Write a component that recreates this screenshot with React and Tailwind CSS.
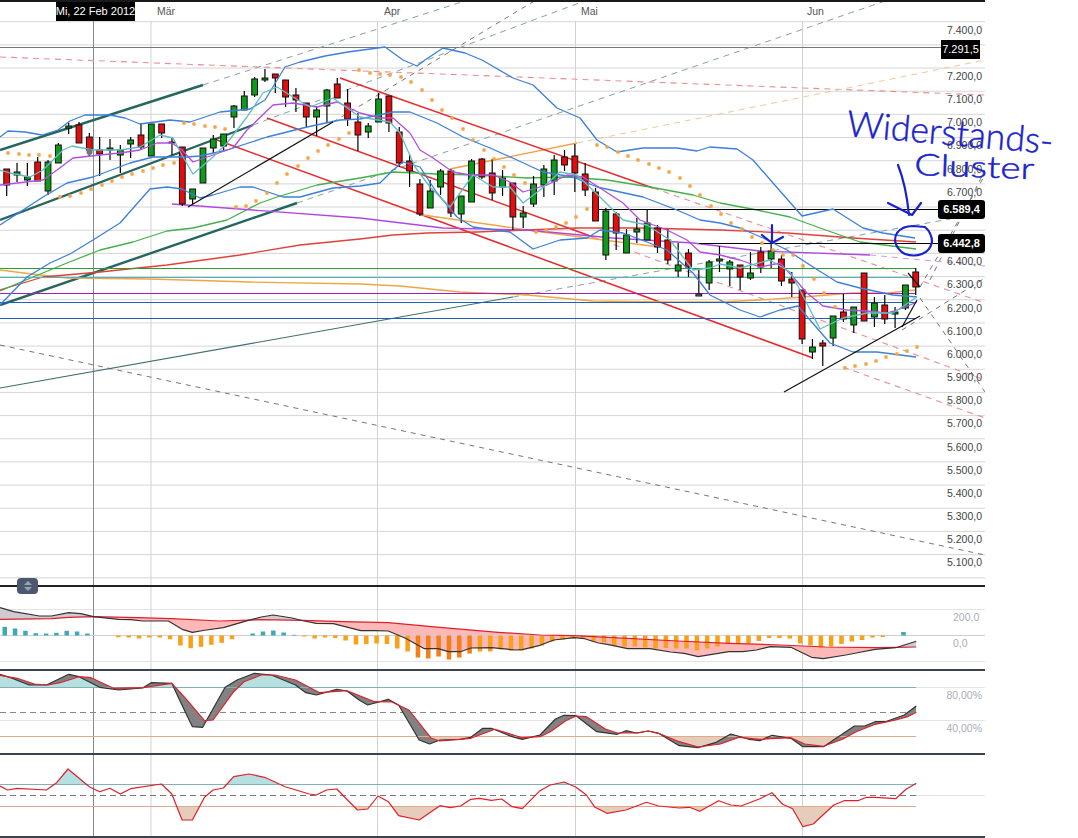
import React from "react";

const candleX = (i) => 6.7 + 10.33 * i;

// bodyTop, bodyBottom, wickTop, wickBottom, colour
const candles = [
  [169,185,169,196,"r"],[172,175,163,182,"g"],[177,180,163,186,"g"],[162,181,157,181,"r"],[162,191,160,195,"g"],
  [145,163,143,163,"g"],[126,128,123,134,"g"],[125,143,122,143,"r"],[137,150,133,157,"r"],[150,154,137,176,"r"],
  [148,150,139,160,"g"],[150,155,145,173,"g"],[140,144,137,158,"g"],[135,147,123,150,"r"],[124,156,124,156,"g"],
  [124,133,124,138,"r"],[142,143,137,155,"g"],[147,204,147,206,"r"],[189,199,189,204,"g"],[148,183,148,183,"g"],
  [139,148,135,153,"g"],[134,146,134,150,"g"],[106,117,105,128,"g"],[96,110,91,110,"g"],[79,95,77,97,"g"],
  [78,80,69,82,"g"],[74,78,74,93,"r"],[80,97,80,107,"r"],[95,100,88,112,"r"],[103,117,103,128,"r"],
  [110,117,106,136,"g"],[90,106,89,123,"g"],[84,98,78,98,"r"],[103,119,89,126,"r"],[122,135,113,151,"r"],
  [126,132,123,138,"g"],[99,122,93,122,"g"],[96,123,96,132,"r"],[132,163,127,167,"r"],[161,171,154,187,"r"],
  [184,214,179,216,"r"],[191,208,180,208,"g"],[171,187,169,195,"g"],[171,213,169,217,"r"],[196,214,196,223,"g"],
  [161,202,159,202,"g"],[159,177,158,179,"r"],[173,193,159,200,"r"],[178,187,170,196,"g"],[183,217,183,230,"r"],
  [213,217,206,228,"g"],[184,204,176,207,"g"],[169,185,165,197,"g"],[160,181,155,195,"g"],[157,165,150,171,"r"],
  [156,173,144,192,"r"],[174,190,163,196,"r"],[192,221,188,221,"r"],[211,255,208,260,"g"],[214,233,212,250,"r"],
  [235,253,229,253,"g"],[229,232,218,243,"g"],[223,240,210,240,"g"],[228,247,225,253,"r"],[240,260,229,264,"r"],
  [265,271,243,277,"g"],[253,267,249,277,"r"],[294,296,269,296,"k"],[262,283,260,290,"g"],[259,261,246,272,"g"],
  [262,269,260,286,"g"],[265,277,265,290,"r"],[273,278,252,280,"g"],[252,267,247,273,"r"],[251,259,243,268,"g"],
  [259,281,255,286,"r"],[279,283,272,297,"r"],[290,339,290,344,"r"],[347,352,339,359,"g"],[343,346,340,366,"r"],
  [316,338,316,346,"g"],[312,319,294,322,"r"],[307,325,307,333,"g"],[273,321,273,321,"r"],[303,317,297,327,"g"],
  [305,319,295,324,"r"],[312,314,307,328,"g"],[285,308,285,310,"g"],[272,287,268,295,"r"],
];

const bollUp = [[0,137],[8,131],[25,132],[42,135],[58,130],[70,121],[85,115],[110,115],[125,118],[140,124],[170,120],[190,122],[220,112],[250,109],[265,100],[285,67],[300,62],[325,56],[348,52],[385,47],[403,60],[417,66],[425,60],[443,48],[465,53],[482,60],[513,78],[533,85],[557,108],[580,118],[597,140],[617,152],[643,148],[677,148],[697,151],[710,147],[737,149],[753,160],[773,183],[802,216],[833,209],[863,228],[883,233],[915,238]];
const bollMid = [[0,225],[43,197],[67,183],[93,177],[130,163],[153,157],[187,157],[200,156],[227,150],[267,137],[307,127],[340,120],[360,119],[393,112],[410,112],[437,123],[463,137],[490,148],[517,160],[543,172],[573,177],[597,187],[643,197],[677,210],[700,220],[720,223],[740,228],[763,238],[787,250],[813,267],[837,282],[860,288],[893,295],[917,297]];
const bollLow = [[0,305],[27,277],[50,263],[70,254],[93,240],[120,223],[150,189],[167,187],[182,189],[200,198],[213,195],[240,187],[253,187],[283,197],[300,197],[333,188],[360,186],[380,183],[393,170],[403,162],[420,167],[437,193],[457,217],[473,227],[510,232],[533,249],[560,240],[587,238],[600,230],[623,233],[647,242],[667,250],[693,273],[710,295],[740,310],[760,317],[780,310],[798,306],[810,320],[830,343],[853,352],[877,352],[916,357]];
const purple = [[0,185],[43,180],[57,170],[73,158],[100,155],[120,153],[140,150],[157,143],[172,143],[182,150],[193,162],[213,155],[233,148],[247,130],[273,105],[293,103],[317,107],[337,102],[360,113],[380,118],[393,118],[410,133],[420,150],[433,158],[453,172],[470,175],[493,175],[510,182],[523,192],[547,185],[567,175],[583,177],[600,188],[623,203],[640,220],[667,230],[687,240],[700,252],[720,255],[740,260],[760,267],[780,263],[793,277],[807,293],[823,306],[847,310],[867,311],[887,313],[903,308],[917,302]];
const teal = [[0,170],[10,173],[30,177],[43,170],[63,150],[72,146],[93,150],[120,150],[140,147],[160,135],[173,138],[183,157],[193,174],[213,157],[227,143],[247,117],[263,93],[277,87],[293,97],[310,107],[333,98],[360,117],[390,122],[400,133],[415,167],[430,187],[450,207],[460,193],[473,175],[493,187],[510,187],[523,203],[540,190],[560,172],[577,175],[600,197],[623,220],[647,225],[670,240],[693,270],[710,268],[720,264],[740,268],[770,260],[790,272],[800,290],[820,329],[843,318],[867,313],[893,313],[917,297]];
const greenMa = [[0,291],[33,277],[67,263],[100,250],[133,242],[167,231],[193,228],[227,220],[260,203],[277,197],[317,185],[360,178],[393,172],[437,174],[477,175],[527,178],[567,177],[607,180],[650,187],[693,195],[720,203],[757,210],[790,217],[820,228],[860,242],[916,249]];
const redMa = [[0,290],[43,277],[100,272],[167,265],[240,255],[300,245],[360,239],[393,235],[427,233],[477,232],[527,230],[577,228],[643,228],[720,230],[787,233],[853,238],[916,242]];
const purpleLong = [[172,204],[360,218],[443,228],[527,230],[613,238],[693,243],[760,251],[870,255]];
const orangeLong = [[0,270],[40,275],[67,278],[150,279],[250,282],[360,284],[400,286],[460,292],[527,295],[593,301],[660,302],[720,302],[760,300],[803,297],[853,293],[887,293],[916,290]];
const orangeLow = [[423,215],[493,225],[527,230],[603,240],[660,247]];

const psar = [
  [8,153],[19,154],[29,155],[39,155],[50,156],[60,197],[70,196],[81,193],[91,189],[102,185],[112,181],[122,177],[132,174],[143,171],[153,168],[163,165],[174,163],
  [184,123],[194,124],[205,126],[215,127],[225,129],[236,207],[246,206],[256,201],[267,193],[277,183],[287,174],[298,166],[308,158],[318,151],[328,145],[339,139],[349,133],
  [359,70],[370,73],[380,74],[390,75],[401,77],[411,82],[422,90],[432,100],[442,110],[452,118],[463,129],[473,140],[484,150],[494,159],[504,167],[514,175],[525,183],
  [536,232],[546,230],[556,227],[566,223],[576,217],[587,209],[597,145],[607,147],[618,152],[628,156],[638,160],[649,164],[659,168],[669,172],[680,178],[690,186],[700,195],[711,206],
  [721,214],[731,223],[742,229],[752,237],[762,243],[773,250],[783,255],[793,255],[803,266],[814,279],[824,293],[835,307],[845,368],[855,366],[866,364],[876,361],[886,357],[897,354],[907,351],[917,347],
];

// straight segments: x1,y1,x2,y2
const solidRed = [[340,78,653,188],[267,118,593,237],[217,140,813,358]];
const dashedRed = [[653,188,985,303],[593,237,985,380],[843,367,985,418],[0,57,985,95]];
const solidTeal = [[0,150,203,85],[0,220,253,125],[0,305,297,203]];
const dashedTeal = [[203,85,468,0],[253,125,587,0],[297,203,888,0],[513,297,950,219]];
const dashedGray = [[333,122,536,0],[0,345,985,555],[920,287,985,175],[930,280,985,170],[920,298,985,392],[902,330,985,278]];
const solidBlack = [[188,207,333,122],[784,392,920,316],[902,327,917,300],[908,273,920,287]];

const macdHist = [8.7,7,4.7,2.3,2,2.7,4.7,4,2,0,0,-1.7,-2,-3,-2,-2,-3.7,-10,-12.7,-11.3,-9.3,-7.3,-3.7,0,2,4,5,3,0.7,-1,-3,-2,-2.5,-5,-9,-8.7,-8,-8.5,-13,-16,-22,-23,-21,-24,-22,-18,-16,-16,-14,-15,-15,-13,-10,-6,-4,-3,-3.5,-6,-7,-10,-11,-11,-12,-13,-12.5,-13,-13,-15,-13,-11,-8,-8,-8,-5.5,-2.5,-2.5,-3,-8,-10,-12,-11,-8.5,-6,-4.5,-2,-1.5,0,3.5];

// readings taken off the crops, left half and right half of the indicators
const left = (pts) => pts.map(([x, y]) => [x / 2.91, 570 + y / 3]);
const right = (pts) => pts.map(([x, y]) => [540 + x / 2.91, 570 + y / 3]);

const macdBlack = [...left([[0,113],[40,125],[115,138],[150,138],[200,128],[235,131],[272,140],[345,148],[380,149],[415,153],[490,153],[530,178],[560,187],[600,180],[650,173],[720,152],[760,141],[795,135],[850,144],[885,153],[920,160],[970,161],[1050,182],[1090,182],[1130,183],[1180,205],[1235,236],[1275,236],[1305,245],[1340,245],[1370,234],[1430,233],[1500,240],[1520,239]]), ...right([[0,226],[40,210],[100,203],[130,206],[170,219],[200,224],[255,236],[320,236],[380,246],[420,250],[460,260],[550,245],[590,245],[630,240],[670,230],[730,232],[790,262],[825,266],[890,255],[920,249],[975,238],[1035,233],[1095,214]])];
const macdRed = [...left([[0,148],[150,146],[200,142],[272,140],[400,143],[500,146],[640,153],[760,149],[880,151],[1000,155],[1130,158],[1280,172],[1450,187]]), ...right([[0,195],[100,197],[200,202],[400,213],[550,220],[700,225],[830,231],[975,233],[1035,232],[1095,231]])];

const stochBlack = [...left([[0,313],[35,325],[85,345],[135,345],[200,313],[230,320],[290,352],[345,360],[415,354],[440,338],[500,340],[525,395],[560,470],[590,472],[655,352],[690,330],[740,310],[790,315],[860,345],[890,368],[920,375],[980,358],[1010,363],[1045,390],[1070,405],[1130,388],[1160,405],[1220,510],[1250,522],[1280,510],[1340,508],[1370,502],[1405,475],[1430,475],[1490,500],[1520,508]]), ...right([[0,495],[45,447],[70,436],[105,437],[165,485],[225,493],[250,482],[280,489],[315,483],[345,490],[405,527],[460,533],[510,518],[555,492],[610,508],[640,512],[675,496],[730,505],[765,530],[825,530],[915,468],[945,468],[975,455],[1005,455],[1060,435],[1095,408]])];
const stochRed = [...left([[0,316],[50,325],[100,342],[140,345],[175,338],[230,320],[265,323],[330,355],[415,353],[500,340],[540,385],[595,452],[620,450],[680,365],[710,335],[760,315],[800,315],[860,330],[930,368],[1010,362],[1090,395],[1140,396],[1190,420],[1255,505],[1280,513],[1370,505],[1440,478],[1520,503]]), ...right([[0,500],[30,485],[75,452],[105,438],[135,440],[190,477],[225,489],[285,489],[315,483],[345,490],[405,515],[460,531],[525,522],[580,502],[640,508],[730,503],[770,522],[825,529],[880,508],[920,485],[975,463],[1035,450],[1070,440],[1095,427]])];
const rsi = [...left([[0,648],[22,660],[50,655],[135,660],[165,638],[198,597],[260,650],[290,665],[320,655],[350,672],[380,656],[470,642],[500,672],[530,750],[560,750],[595,682],[620,660],[650,654],[680,620],[725,612],[770,622],[830,650],[900,672],[920,675],[950,660],[980,657],[1040,720],[1070,717],[1100,678],[1130,695],[1160,737],[1220,750],[1280,707],[1310,713],[1340,708],[1370,688],[1395,685],[1430,691],[1460,687],[1490,710],[1520,716]]), ...right([[0,662],[30,645],[70,636],[105,652],[135,675],[160,712],[195,730],[250,720],[310,697],[345,708],[405,714],[435,712],[465,724],[520,692],[555,705],[585,708],[640,686],[675,668],[705,702],[735,716],[765,770],[795,762],[855,705],[885,692],[925,692],[950,682],[975,682],[1035,686],[1065,658],[1095,640]])];

const toPoints = (pts) => pts.map(([x, y]) => `${x.toFixed(1)},${y.toFixed(1)}`).join(" ");

function yAt(pts, x) {
  for (let i = 1; i < pts.length; i++) {
    if (x <= pts[i][0]) {
      const [x0, y0] = pts[i - 1];
      const [x1, y1] = pts[i];
      return y0 + ((y1 - y0) * (x - x0)) / (x1 - x0 || 1);
    }
  }
  return pts[pts.length - 1][1];
}

// polygons between two lines, split where they cross. above = a is higher on screen
function bands(a, b) {
  const out = [];
  let run = null;
  const end = Math.min(a[a.length - 1][0], b[b.length - 1][0]);
  for (let x = 0; x <= end; x += 1) {
    const ya = yAt(a, x);
    const yb = yAt(b, x);
    const above = ya < yb;
    if (!run || run.above !== above) {
      run = { above, top: [], bottom: [] };
      out.push(run);
    }
    run.top.push([x, ya]);
    run.bottom.push([x, yb]);
  }
  return out.map((r) => ({ above: r.above, points: toPoints([...r.top, ...r.bottom.reverse()]) }));
}

const level = (y) => [[0, y], [985, y]];

function Segments({ items, color, width = 1, dash }) {
  return items.map(([x1, y1, x2, y2], i) => (
    <line key={i} x1={x1} y1={y1} x2={x2} y2={y2} stroke={color} strokeWidth={width} strokeDasharray={dash} />
  ));
}

function Line({ pts, color, width = 1.3 }) {
  return <polyline points={toPoints(pts)} fill="none" stroke={color} strokeWidth={width} strokeLinejoin="round" />;
}

function VGrid({ y1, y2 }) {
  return (
    <>
      {[151, 377.5, 575.5, 802.5].map((x) => (
        <line key={x} x1={x} y1={y1} x2={x} y2={y2} stroke="#d2d2d2" />
      ))}
      <line x1="93.5" y1={y1} x2="93.5" y2={y2} stroke="#8a8a8a" />
    </>
  );
}

function PriceChart() {
  return (
    <svg className="block w-[985px] h-[583px]" viewBox="0 2 985 583">
      {Array.from({ length: 25 }, (_, k) => (
        <line key={k} x1="0" x2="985" y1={21.7 + 23.17 * k} y2={21.7 + 23.17 * k} stroke="#d6d6d6" />
      ))}
      <VGrid y1="21" y2="585" />
      <line x1="0" y1="47.5" x2="941" y2="47.5" stroke="#777" />

      <Segments items={dashedTeal} color="#85a3a3" dash="6 5" />
      <Segments items={dashedGray} color="#777" dash="5 5" />
      <Segments items={dashedRed} color="#ea8f8f" dash="6 5" width={1.1} />
      <Segments items={[[450,169,577,143]]} color="#f0a040" width={1.3} />
      <Segments items={[[577,143,985,60]]} color="#f3c894" dash="6 5" />
      <Segments items={[[0,388,513,297]]} color="#3f6e6e" width={1.1} />
      <Segments items={[[870,255,985,266]]} color="#cf9ae8" dash="6 5" />
      <Segments items={solidTeal} color="#25665f" width={2.4} />
      <Segments items={solidRed} color="#e62a2a" width={1.5} />

      <Line pts={orangeLong} color="#f0a548" />
      <Line pts={orangeLow} color="#f0a548" />
      <Line pts={redMa} color="#e0413a" />
      <Line pts={greenMa} color="#43b04a" />
      <Line pts={purpleLong} color="#b048e0" />

      <line x1="0" x2="916" y1="268.5" y2="268.5" stroke="#2c9e2c" />
      <line x1="0" x2="916" y1="277.5" y2="277.5" stroke="#4db5bb" />
      <line x1="0" x2="916" y1="293.5" y2="293.5" stroke="#a01fb8" />
      <line x1="0" x2="916" y1="302.5" y2="302.5" stroke="#1a5fc0" />
      <line x1="0" x2="916" y1="318.5" y2="318.5" stroke="#1a5fc0" />
      <line x1="599" x2="941" y1="209.5" y2="209.5" stroke="#000" />
      <line x1="699" x2="941" y1="243.5" y2="243.5" stroke="#000" />

      {candles.map(([top, bottom, wickTop, wickBottom, c], i) => {
        const x = candleX(i);
        const fill = c === "r" ? "#e30d0d" : c === "g" ? "#0f9a1c" : "#777";
        return (
          <g key={i}>
            <line x1={x} x2={x} y1={wickTop} y2={wickBottom} stroke="#000" strokeWidth="1.2" />
            <rect x={x - 2.9} y={top} width="5.8" height={bottom - top} fill={fill} stroke="#111" strokeWidth="1" />
          </g>
        );
      })}

      <Line pts={bollUp} color="#3c7fdc" />
      <Line pts={bollMid} color="#3c7fdc" />
      <Line pts={bollLow} color="#3c7fdc" />
      <Line pts={purple} color="#b04fe0" />
      <Line pts={teal} color="#62bcc2" />
      <Segments items={solidBlack} color="#111" width={1.2} />

      {psar.map(([x, y], i) => (
        <rect key={i} x={x - 1.7} y={y - 1.7} width="3.4" height="3.4" rx="0.8" fill="#f3a648" />
      ))}
      <circle cx="89.5" cy="152" r="3" fill="#777" />
    </svg>
  );
}

function MacdChart() {
  return (
    <svg className="block w-[985px] h-[82px]" viewBox="0 587 985 82">
      <line x1="0" x2="985" y1="609.5" y2="609.5" stroke="#e4e4e4" />
      <line x1="0" x2="985" y1="661.5" y2="661.5" stroke="#e4e4e4" />
      <VGrid y1="587" y2="669" />
      {bands(macdBlack, macdRed).map((b, i) => (
        <polygon key={i} points={b.points} fill={b.above ? "#cfcbd0" : "#ffb8b8"} />
      ))}
      <line x1="0" x2="985" y1="635.5" y2="635.5" stroke="#cfcfcf" />
      {macdHist.map((v, i) =>
        v === 0 ? null : (
          <rect
            key={i}
            x={candleX(i) - 4.2}
            y={v > 0 ? 635.5 - v : 635.5}
            width="4.5"
            height={Math.abs(v)}
            fill={v > 0 ? "#3fa9b9" : v < -16 ? "#f57f17" : "#f9a01b"}
          />
        )
      )}
      <Line pts={macdRed} color="#e01f2a" width={1.2} />
      <Line pts={macdBlack} color="#333" width={1.2} />
    </svg>
  );
}

function StochChart() {
  const hi = level(687.5);
  const lo = level(736.5);
  return (
    <svg className="block w-[985px] h-[82px]" viewBox="0 671 985 82">
      <line x1="0" x2="985" y1="687.5" y2="687.5" stroke="#e4e4e4" />
      <line x1="0" x2="985" y1="720.5" y2="720.5" stroke="#e4e4e4" />
      <VGrid y1="671" y2="753" />
      {bands(stochRed, hi).filter((b) => b.above).map((b, i) => (
        <polygon key={i} points={b.points} fill="#b6dfe0" />
      ))}
      {bands(stochRed, lo).filter((b) => !b.above).map((b, i) => (
        <polygon key={i} points={b.points} fill="#e6cdbb" />
      ))}
      {bands(stochBlack, stochRed).map((b, i) => (
        <polygon key={i} points={b.points} fill="#828282" />
      ))}
      <line x1="0" x2="916" y1="687.5" y2="687.5" stroke="#7fb2b5" />
      <line x1="0" x2="916" y1="712.5" y2="712.5" stroke="#888" strokeDasharray="6 4" />
      <line x1="0" x2="916" y1="736.5" y2="736.5" stroke="#e0a98c" />
      <Line pts={stochBlack} color="#333" width={1.2} />
      <Line pts={stochRed} color="#e01f2a" width={1.2} />
    </svg>
  );
}

function RsiChart() {
  const hi = level(784.5);
  const lo = level(806.7);
  return (
    <svg className="block w-[985px] h-[81px]" viewBox="0 755 985 81">
      <VGrid y1="755" y2="836" />
      {bands(rsi, hi).filter((b) => b.above).map((b, i) => (
        <polygon key={i} points={b.points} fill="#b6dfe0" />
      ))}
      {bands(rsi, lo).filter((b) => !b.above).map((b, i) => (
        <polygon key={i} points={b.points} fill="#e6cdbb" />
      ))}
      <line x1="0" x2="916" y1="784.5" y2="784.5" stroke="#7fb2b5" />
      <line x1="0" x2="916" y1="795.5" y2="795.5" stroke="#777" strokeDasharray="6 4" />
      <line x1="916" x2="985" y1="795.5" y2="795.5" stroke="#e4e4e4" />
      <line x1="0" x2="916" y1="806.5" y2="806.5" stroke="#e0a98c" />
      <Line pts={rsi} color="#e01f2a" width={1.2} />
    </svg>
  );
}

// blank rows sit behind the black price tags
const prices = ["7.400,0","","7.200,0","7.100,0","7.000,0","6.900,0","6.800,0","6.700,0","","","6.400,0","6.300,0","6.200,0","6.100,0","6.000,0","5.900,0","5.800,0","5.700,0","5.600,0","5.500,0","5.400,0","5.300,0","5.200,0","5.100,0"];

function Handwriting() {
  return (
    <svg className="absolute inset-0 w-[1078px] h-[838px] pointer-events-none" viewBox="0 0 1078 838" fill="none" stroke="#1a22cc" strokeWidth="2.2" strokeLinecap="round" strokeLinejoin="round">
      <text x="846" y="136" transform="rotate(5 846 136)" textLength="207" lengthAdjust="spacingAndGlyphs" fontSize="36" strokeWidth="0.5" fill="#1a22cc" className="font-['Lato'] font-light">Widerstands-</text>
      <text x="914" y="175" transform="rotate(2 914 175)" textLength="120" lengthAdjust="spacingAndGlyphs" fontSize="30" strokeWidth="0.5" fill="#1a22cc" className="font-['Lato'] font-light">Cluster</text>
      <path d="M898 165 Q906 185 909 215" />
      <path d="M888 203 L912 215 L921 203" />
      <path d="M772 225 L772 243" />
      <path d="M762 235 L772 243 L783 237" />
      <path d="M897 233 Q902 226 913 226 L925 227 Q932 233 932 242 Q930 251 922 254 Q914 257 905 254 Q897 250 895 241 Q895 236 897 233 Z" />
    </svg>
  );
}

export default function App() {
  return (
    <div className="relative w-[1078px] h-[838px] overflow-hidden bg-white font-['Liberation_Sans',Arial,sans-serif]">
      <div className="flex flex-col w-[985px]">
        <div className="h-[2px] bg-[#1a1a1a]" />
        <div className="relative">
          <PriceChart />
          {/* month columns line up with the vertical grid */}
          <div className="absolute inset-x-0 top-0 h-[19px] grid grid-cols-[56px_95px_226px_198px_227px_1fr] items-center text-[10.5px] text-[#555]">
            <div />
            <div className="w-[79px] h-[19px] bg-black flex items-center justify-center whitespace-nowrap text-[11px] text-white">
              Mi, 22 Feb 2012
            </div>
            <span className="pl-[6px]">Mär</span>
            <span className="pl-[7px]">Apr</span>
            <span className="pl-[6px]">Mai</span>
            <span className="pl-[5px]">Jun</span>
          </div>
          <div className="absolute right-[3px] top-[17px] flex flex-col items-end text-[10.5px] text-[#444]">
            {prices.map((p, i) => (
              <div key={i} className="h-[23.17px] flex items-center">
                {p}
              </div>
            ))}
          </div>
          <div className="absolute left-[941px] top-[38px] h-[19px] w-[39px] bg-black flex items-center justify-center text-[11px] text-white">7.291,5</div>
          <div className="absolute left-[938px] top-[198px] h-[19px] w-[47px] rounded-[3px] bg-black flex items-center justify-center text-[11px] font-bold text-white">6.589,4</div>
          <div className="absolute left-[938px] top-[232px] h-[19px] w-[47px] rounded-[3px] bg-black flex items-center justify-center text-[11px] font-bold text-white">6.442,8</div>
        </div>
        <div className="relative h-[2px] bg-[#222]">
          <div className="absolute left-[17px] top-[-7px] w-[21px] h-[16px] rounded-[4px] bg-[#4b5870] flex flex-col items-center justify-center gap-[2px]">
            <div className="w-0 h-0 border-x-[4px] border-x-transparent border-b-[4px] border-b-[#9aa3b2]" />
            <div className="w-0 h-0 border-x-[4px] border-x-transparent border-t-[4px] border-t-[#9aa3b2]" />
          </div>
        </div>
        <div className="relative">
          <MacdChart />
          <div className="absolute left-[953px] top-[24px] flex flex-col gap-[14px] text-[10.5px] leading-[12px] text-[#a9aeb5]">
            <span>200,0</span>
            <span>0,0</span>
          </div>
        </div>
        <div className="h-[2px] bg-[#3a4350]" />
        <div className="relative">
          <StochChart />
          <div className="absolute right-[3px] top-[18px] flex flex-col gap-[21px] text-[10.5px] leading-[12px] text-[#a9aeb5]">
            <span>80,00%</span>
            <span>40,00%</span>
          </div>
        </div>
        <div className="h-[2px] bg-[#3a4350]" />
        <RsiChart />
        <div className="h-[2px] bg-[#3a4350]" />
      </div>
      <Handwriting />
    </div>
  );
}
